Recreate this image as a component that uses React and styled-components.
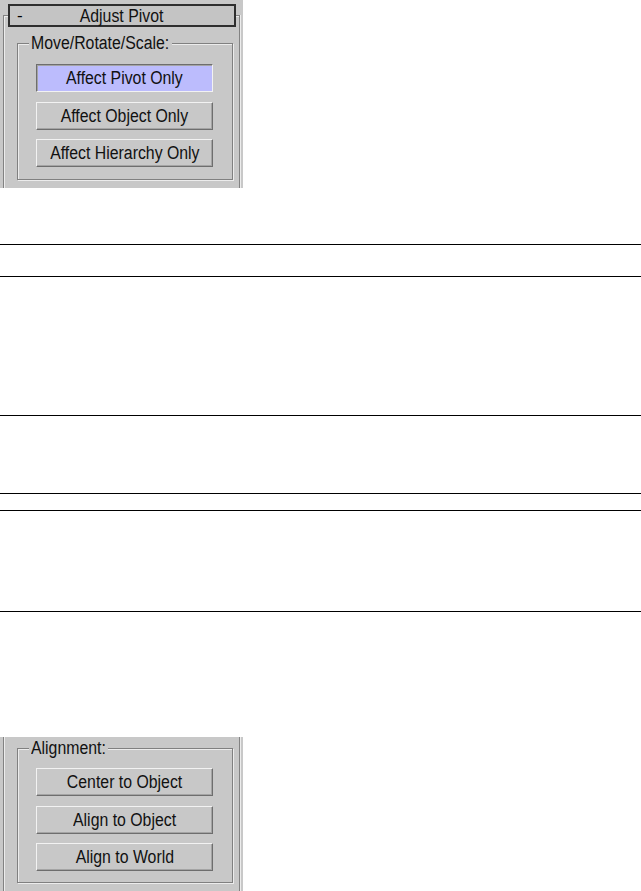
import React from 'react';
import styled, { createGlobalStyle } from 'styled-components';

const GlobalStyle = createGlobalStyle`
    html, body {
        margin: 0;
        padding: 0;
        background: #ffffff;
    }
    body {
        font-family: "Liberation Sans", Arial, sans-serif;
        color: #000;
    }
`;

const Page = styled.div`
    display: flex;
    flex-direction: column;
    width: 641px;
    height: 891px;
    overflow: hidden;
`;

const Panel = styled.div`
    display: flex;
    flex-direction: column;
    width: 243px;
    height: ${p => p.$height}px;
    margin-top: ${p => p.$offset || 0}px;
    padding-top: ${p => p.$padTop || 0}px;
    box-sizing: border-box;
    background: #c8c8c8;
    flex-shrink: 0;
`;

// narrow UI lettering, as in the old Max panels
const Text = styled.span`
    display: inline-block;
    font-size: 18px;
    line-height: 18px;
    white-space: nowrap;
    color: #111;
    transform: scaleX(0.88);
    transform-origin: ${p => (p.$left ? 'left center' : 'center')};
`;

const TitleBar = styled.div`
    position: relative;
    z-index: 1;
    display: grid;
    grid-template-columns: 24px 1fr 24px;
    align-items: center;
    height: 23px;
    margin: 0 7px 0 8px;
    box-sizing: border-box;
    border: 2px solid #2e2e2e;
    background: #c4c4c4;
`;

const Minus = styled.span`
    padding-left: 7px;
    font-size: 17px;
`;

const Title = styled.span`
    text-align: center;
`;

const Frame = styled.div`
    flex: 1;
    margin: ${p => (p.$underTitle ? '-12px 3px 0 3px' : '0 3px 0 3px')};
    border: 1px solid #828282;
    border-top-width: ${p => (p.$underTitle ? 1 : 0)}px;
    border-bottom: none;
    box-shadow: inset 1px ${p => (p.$underTitle ? 1 : 0)}px 0 #ececec, 1px 0 0 #ececec;
    padding-top: ${p => p.$padTop}px;
`;

const GroupBox = styled.div`
    display: flex;
    flex-direction: column;
    width: 216px;
    margin-left: 13px;
    box-sizing: border-box;
    border: 1px solid #808080;
    box-shadow: inset 1px 1px 0 #ececec, 1px 1px 0 #ececec;
    padding: 0 0 ${p => p.$padBottom}px 18px;
`;

const Caption = styled.span`
    align-self: flex-start;
    width: ${p => p.$w}px;
    height: 18px;
    margin: -10px 0 0 -7px;
    padding: 0 2px;
    background: #c8c8c8;
`;

const Buttons = styled.div`
    display: flex;
    flex-direction: column;
    gap: 9.5px;
    margin-top: ${p => p.$top}px;
`;

const Button = styled.div`
    display: flex;
    align-items: center;
    justify-content: center;
    width: 177px;
    height: 28px;
    box-sizing: border-box;
    border: 1px solid;
    border-color: ${p => (p.$pressed ? '#6e6e6e #f2f2f2 #f2f2f2 #6e6e6e' : '#f2f2f2 #6e6e6e #6e6e6e #f2f2f2')};
    background: ${p => (p.$pressed ? '#bcbcfd' : '#c8c8c8')};
    box-shadow: ${p => (p.$pressed ? 'inset 1px 1px 0 #a4a4a4' : 'inset -1px -1px 0 #a4a4a4')};
`;

const Rule = styled.div`
    height: 1px;
    margin-top: ${p => p.$gap}px;
    background: #000;
    flex-shrink: 0;
`;

const rules = [56, 31, 138, 77, 16, 100];

export default function App() {
    return (
        <Page>
            <GlobalStyle />
            <Panel $height={188} $padTop={4}>
                <TitleBar>
                    <Minus>-</Minus>
                    <Title><Text>Adjust Pivot</Text></Title>
                </TitleBar>
                <Frame $underTitle $padTop={27}>
                    <GroupBox $padBottom={12}>
                        <Caption $w={139}><Text $left>Move/Rotate/Scale:</Text></Caption>
                        <Buttons $top={12}>
                            <Button $pressed><Text>Affect Pivot Only</Text></Button>
                            <Button><Text>Affect Object Only</Text></Button>
                            <Button><Text>Affect Hierarchy Only</Text></Button>
                        </Buttons>
                    </GroupBox>
                </Frame>
            </Panel>

            {rules.map((gap, i) => (
                <Rule key={i} $gap={gap} />
            ))}

            <Panel $height={154} $offset={125}>
                <Frame $padTop={11}>
                    <GroupBox $padBottom={11}>
                        <Caption $w={75}><Text $left>Alignment:</Text></Caption>
                        <Buttons $top={11}>
                            <Button><Text>Center to Object</Text></Button>
                            <Button><Text>Align to Object</Text></Button>
                            <Button><Text>Align to World</Text></Button>
                        </Buttons>
                    </GroupBox>
                </Frame>
            </Panel>
        </Page>
    );
}
